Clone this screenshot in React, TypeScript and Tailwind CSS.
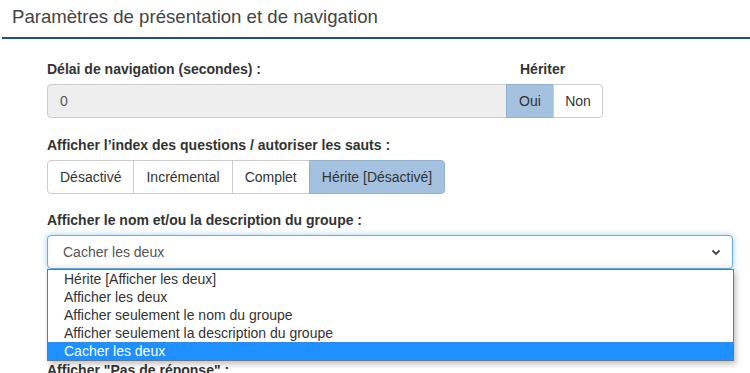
import React from "react";

const font = { fontFamily: '"Liberation Sans", Arial, sans-serif' };

function Label({ children, className = "" }: { children: React.ReactNode; className?: string }) {
  return (
    <div className={"h-[20px] leading-[20px] text-[14px] font-bold text-[#333] mb-[5px] " + className}>
      {children}
    </div>
  );
}

function BtnGroup({ items, active }: { items: string[]; active: number }) {
  return (
    <div className="flex">
      {items.map((t, i) => (
        <div
          key={t}
          className={
            "h-[34px] px-3 flex items-center text-[14px] text-[#333] border " +
            (i === active ? "bg-[#a4c1e0] border-[#8fb0d3] " : "bg-white border-[#ccc] ") +
            (i > 0 ? "-ml-px " : "") +
            (i === 0 ? "rounded-l-[4px] " : "") +
            (i === items.length - 1 ? "rounded-r-[4px] " : "")
          }
        >
          {t}
        </div>
      ))}
    </div>
  );
}

export default function App() {
  const options = [
    "Hérite [Afficher les deux]",
    "Afficher les deux",
    "Afficher seulement le nom du groupe",
    "Afficher seulement la description du groupe",
    "Cacher les deux",
  ];
  return (
    <div className="w-[750px] h-[373px] overflow-hidden bg-white" style={font}>
      <div className="h-[37px] pl-[12px] pt-[5px] text-[18.6px] leading-[24px] text-[#444]">
        Paramètres de présentation et de navigation
      </div>
      <div className="ml-[2px] h-[2px] bg-[#1f5180]" />

      <div className="pl-[47px] w-[733px] pt-[20px]">
        {/* Group 1 */}
        <div className="flex items-end">
          <div className="flex-1">
            <Label>Délai de navigation (secondes) :</Label>
            <div className="h-[34px] bg-[#eee] border border-[#ccc] rounded-l-[4px] flex items-center pl-[12px] text-[14px] text-[#555]">
              0
            </div>
          </div>
          <div className="w-[97px] -ml-px">
            <Label className="pl-[14px]">Hériter</Label>
            <div className="flex">
              <div className="h-[34px] w-[48px] flex items-center justify-center bg-[#a4c1e0] border border-[#8fb0d3] text-[14px] text-[#333]">
                Oui
              </div>
              <div className="h-[34px] w-[50px] -ml-px flex items-center justify-center bg-white border border-[#ccc] rounded-r-[4px] text-[14px] text-[#333]">
                Non
              </div>
            </div>
          </div>
          <div className="w-[130px]" />
        </div>

        {/* Group 2 */}
        <div className="mt-[17px]">
          <Label>Afficher l’index des questions / autoriser les sauts :</Label>
          <BtnGroup items={["Désactivé", "Incrémental", "Complet", "Hérite [Désactivé]"]} active={3} />
        </div>

        {/* Group 3 */}
        <div className="mt-[16px]">
          <Label>Afficher le nom et/ou la description du groupe :</Label>
          <div className="relative">
            <div className="h-[34px] bg-white border border-[#66afe9] rounded-[4px] flex items-center pl-[15px] pr-[10px] text-[14px] text-[#555] shadow-[inset_0_-3px_4px_rgba(0,0,0,0.06),0_0_6px_rgba(102,175,233,0.6)]">
              <span className="flex-1">Cacher les deux</span>
              <svg width="10" height="7" viewBox="0 0 10 7" className="mr-[1px]">
                <polyline points="1.5,1.5 5,5 8.5,1.5" fill="none" stroke="#444" strokeWidth="1.8" />
              </svg>
            </div>
            <div className="absolute left-0 right-[-1px] top-full z-10 bg-white border border-[#767676] shadow-[2px_3px_6px_rgba(0,0,0,0.25)]">
              {options.map((o, i) => (
                <div
                  key={o}
                  className={
                    "h-[18px] leading-[18px] pl-[16px] text-[14px] " +
                    (i === 4 ? "bg-[#1e90ff] text-white" : "text-[#333]")
                  }
                >
                  {o}
                </div>
              ))}
            </div>
          </div>
        </div>

        {/* Group 4 (hidden under dropdown) */}
        <div className="mt-[16px] h-[59px]" />

        {/* Group 5 */}
        <div className="mt-[16px]">
          <Label>Afficher "Pas de réponse" :</Label>
        </div>
      </div>
    </div>
  );
}
